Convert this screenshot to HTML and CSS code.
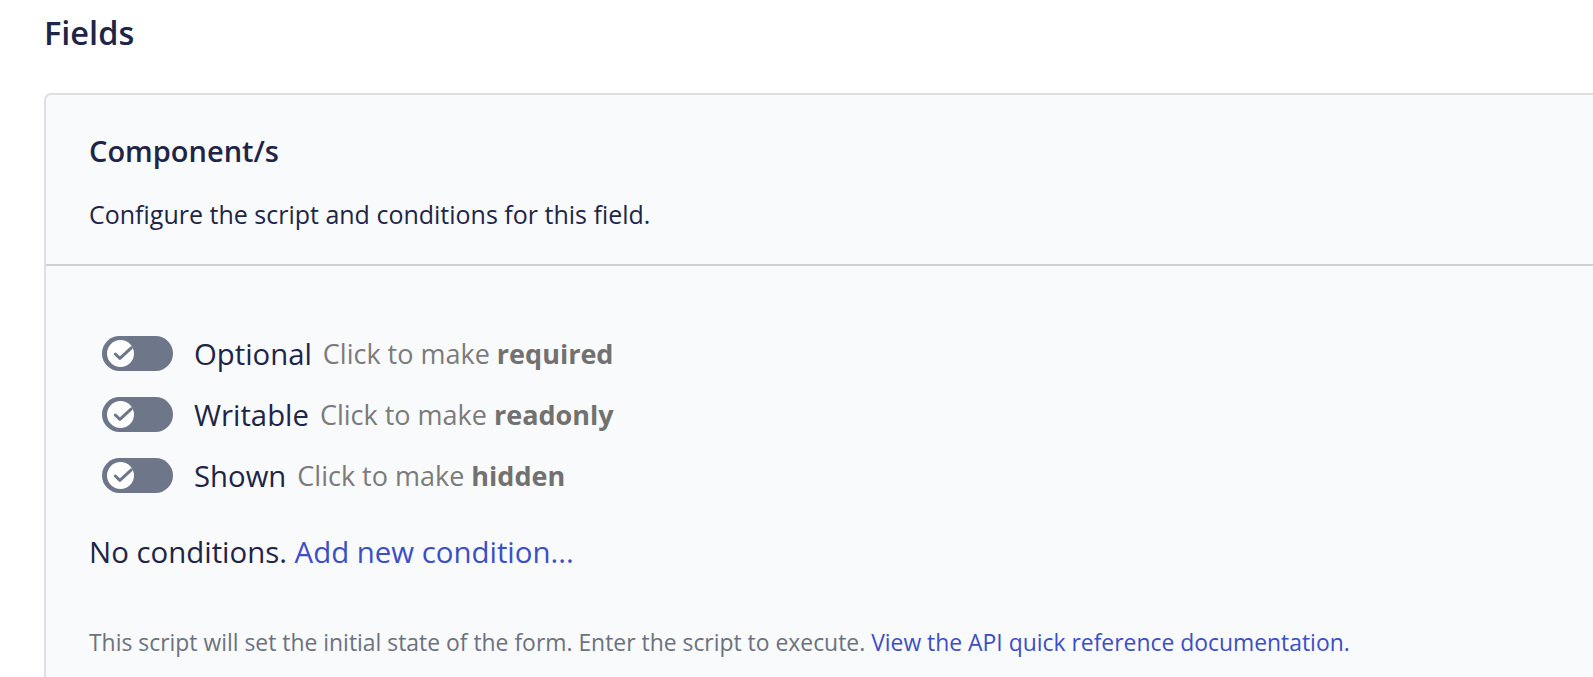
FILE: index.html
```html
<!DOCTYPE html>
<html lang="en">
<head>
<meta charset="utf-8">
<title>Fields</title>
<link rel="stylesheet" href="styles.css">
</head>
<body>
<div class="page">
  <h1 class="title">Fields</h1>
  <section class="card">
    <header class="card-head">
      <h2 class="card-title">Component/s</h2>
      <p class="card-desc">Configure the script and conditions for this field.</p>
    </header>
    <div class="card-body">
      <ul class="toggles">
        <li class="toggle-row">
          <span class="toggle"><span class="knob"><svg class="check" viewBox="0 0 27 27" width="27" height="27"><path d="M8.3 14l4.6 4.4L24.3 7.8" fill="none" stroke="#6e768a" stroke-width="3" stroke-linecap="round" stroke-linejoin="round"/></svg></span></span>
          <span class="state">Optional</span>
          <span class="hint">Click to make <b>required</b></span>
        </li>
        <li class="toggle-row">
          <span class="toggle"><span class="knob"><svg class="check" viewBox="0 0 27 27" width="27" height="27"><path d="M8.3 14l4.6 4.4L24.3 7.8" fill="none" stroke="#6e768a" stroke-width="3" stroke-linecap="round" stroke-linejoin="round"/></svg></span></span>
          <span class="state">Writable</span>
          <span class="hint">Click to make <b>readonly</b></span>
        </li>
        <li class="toggle-row">
          <span class="toggle"><span class="knob"><svg class="check" viewBox="0 0 27 27" width="27" height="27"><path d="M8.3 14l4.6 4.4L24.3 7.8" fill="none" stroke="#6e768a" stroke-width="3" stroke-linecap="round" stroke-linejoin="round"/></svg></span></span>
          <span class="state">Shown</span>
          <span class="hint">Click to make <b>hidden</b></span>
        </li>
      </ul>
      <p class="conditions">No conditions. <a href="#" class="link">Add new condition...</a></p>
      <p class="note">This script will set the initial state of the form. Enter the script to execute. <a href="#" class="link">View the API quick reference documentation.</a></p>
    </div>
  </section>
</div>
</body>
</html>
```

FILE: styles.css
```css
* { box-sizing: border-box; }
html, body { margin: 0; padding: 0; background: #ffffff; }
html { height: 677px; overflow: hidden; }
body {
  font-family: "Open Sans", "Noto Sans", "DejaVu Sans", sans-serif;
  color: #1e2547;
  overflow: hidden;
  height: 677px;
}
.page { padding: 13px 0 0 44px; height: 677px; overflow: hidden; }
.title {
  margin: 0;
  font-size: 32.5px;
  font-weight: 600;
  line-height: 40px;
  color: #1e2547;
}
.card {
  margin-top: 40px;
  width: 1600px;
  height: 584px;
  overflow: hidden;
  background: #f9fafb;
  border: 2px solid #dfdee4;
  border-right: none;
  border-bottom: none;
  border-radius: 7px 0 0 0;
}
.card-head {
  padding: 38px 0 0 43px;
  height: 171px;
  border-bottom: 2px solid #cfd0d5;
}
.card-title {
  margin: 0;
  font-size: 29px;
  font-weight: 600;
  line-height: 36px;
  color: #1e2547;
}
.card-desc {
  margin: 28px 0 0;
  font-size: 25px;
  line-height: 34px;
  color: #1e2547;
}
.card-body { padding: 70px 0 0 43px; }
.toggles {
  list-style: none;
  margin: 0;
  padding: 0 0 0 13px;
  display: flex;
  flex-direction: column;
  gap: 26px;
}
.toggle-row { display: flex; align-items: center; height: 35px; }
.toggle {
  flex: none;
  width: 71px;
  height: 35px;
  border-radius: 18px;
  background: #6e768a;
  display: flex;
  align-items: center;
  padding-left: 5px;
  margin-right: 21px;
}
.knob {
  width: 27px;
  height: 27px;
  border-radius: 50%;
  background: #ffffff;
  display: block;
}
.check { display: block; }
.state { font-size: 29.3px; line-height: 40px; color: #1e2547; margin-right: 11px; white-space: nowrap; }
.hint { font-size: 27px; line-height: 40px; color: #7b7b7b; white-space: nowrap; }
.hint b { font-weight: 700; color: #717171; }
.conditions { margin: 39px 0 0; font-size: 29.4px; line-height: 40px; color: #1e2547; }
.link { color: #3c4fc6; text-decoration: none; }
.note { margin: 56px 0 0; font-size: 22.9px; line-height: 30px; color: #6b7280; white-space: nowrap; }
```
